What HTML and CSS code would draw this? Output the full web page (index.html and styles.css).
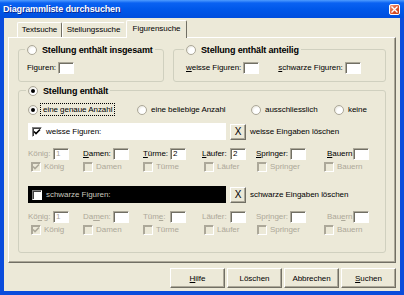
FILE: index.html
```html
<!DOCTYPE html>
<html lang="de">
<head>
  <meta charset="UTF-8" />
  <title>Diagrammliste durchsuchen</title>
  <link rel="stylesheet" href="styles.css">
</head>
<body>
  <div class="window">
    <div class="titlebar">
      <span>Diagrammliste durchsuchen</span>
      <span class="close">
        <svg width="7" height="7" viewBox="0 0 7 7"><path d="M0.5 0.5L6.5 6.5M6.5 0.5L0.5 6.5" stroke="#fff" stroke-width="1.4"/></svg>
      </span>
    </div>

    <div class="client">
      <div class="tabs">
        <span class="tab t1">Textsuche</span>
        <span class="tab t2">Stellungssuche</span>
        <span class="tab active">Figurensuche</span>
      </div>

      <div class="panel">
        <div class="top-groups">
          <fieldset class="group g1">
            <legend><span class="legend-in"><span class="radio"></span><span>Stellung enthält insgesamt</span></span></legend>
            <div class="line"><span>Figuren:</span><span class="field"></span></div>
          </fieldset>
          <fieldset class="group g2">
            <legend><span class="legend-in"><span class="radio"></span><span>Stellung enthält anteilig</span></span></legend>
            <div class="line">
              <span><u>w</u>eisse Figuren:</span><span class="field"></span>
              <span class="spacer"></span>
              <span><u>s</u>chwarze Figuren:</span><span class="field"></span>
            </div>
          </fieldset>
        </div>

        <fieldset class="group g3">
          <legend><span class="legend-in"><span class="radio on"></span><span>Stellung enthält</span></span></legend>

          <div class="choices">
            <span class="opt"><span class="radio on"></span><span class="focus">eine genaue Anzahl</span></span>
            <span class="opt"><span class="radio"></span><span>eine beliebige Anzahl</span></span>
            <span class="opt"><span class="radio"></span><span>ausschliesslich</span></span>
            <span class="opt"><span class="radio"></span><span>keine</span></span>
          </div>

          <div class="bar">
            <span class="bar-field">
              <span class="check">
                <svg width="8" height="8" viewBox="0 0 8 8"><path d="M1 3.5L3 5.5L7 1.5" fill="none" stroke="#000" stroke-width="1.6"/></svg>
              </span>
              <span>weisse Figuren:</span>
            </span>
            <span class="xbtn">X</span>
            <span>weisse Eingaben löschen</span>
          </div>

          <div class="counts">
            <span class="off">König:</span><span class="field off">1</span>
            <span><u>D</u>amen:</span><span class="field"></span>
            <span><u>T</u>ürme:</span><span class="field">2</span>
            <span><u>L</u>äufer:</span><span class="field">2</span>
            <span><u>S</u>pringer:</span><span class="field"></span>
            <span><u>B</u>auern:</span><span class="field"></span>
          </div>
          <div class="checks off">
            <span class="cb"><span class="check dim">
              <svg width="8" height="8" viewBox="0 0 8 8"><path d="M1 3.5L3 5.5L7 1.5" fill="none" stroke="#aca899" stroke-width="1.6"/></svg>
            </span><span>König</span></span>
            <span class="cb"><span class="check dim"></span><span>Damen</span></span>
            <span class="cb"><span class="check dim"></span><span>Türme</span></span>
            <span class="cb"><span class="check dim"></span><span>Läufer</span></span>
            <span class="cb"><span class="check dim"></span><span>Springer</span></span>
            <span class="cb"><span class="check dim"></span><span>Bauern</span></span>
          </div>

          <div class="bar dark-row">
            <span class="bar-field dark">
              <span class="check"></span>
              <span>schwarze Figuren:</span>
            </span>
            <span class="xbtn">X</span>
            <span>schwarze Eingaben löschen</span>
          </div>

          <div class="counts off">
            <span>Kö<u>n</u>ig:</span><span class="field">1</span>
            <span>Da<u>m</u>en:</span><span class="field"></span>
            <span>Tüm<u>e</u>:</span><span class="field"></span>
            <span>Läufer:</span><span class="field"></span>
            <span>Spr<u>i</u>nger:</span><span class="field"></span>
            <span>Bau<u>e</u>rn:</span><span class="field"></span>
          </div>
          <div class="checks off">
            <span class="cb"><span class="check dim">
              <svg width="8" height="8" viewBox="0 0 8 8"><path d="M1 3.5L3 5.5L7 1.5" fill="none" stroke="#aca899" stroke-width="1.6"/></svg>
            </span><span>König</span></span>
            <span class="cb"><span class="check dim"></span><span>Damen</span></span>
            <span class="cb"><span class="check dim"></span><span>Türme</span></span>
            <span class="cb"><span class="check dim"></span><span>Läufer</span></span>
            <span class="cb"><span class="check dim"></span><span>Springer</span></span>
            <span class="cb"><span class="check dim"></span><span>Bauern</span></span>
          </div>
        </fieldset>
      </div>

      <div class="buttons">
        <span class="btn"><u>H</u>ilfe</span>
        <span class="btn">Löschen</span>
        <span class="btn">Abbrechen</span>
        <span class="btn"><u>S</u>uchen</span>
      </div>
    </div>
  </div>
</body>
</html>
```

FILE: styles.css
```css
* {
  box-sizing: border-box;
}
body {
  margin: 0;
  width: 404px;
  height: 295px;
  overflow: hidden;
  font-family: "Liberation Sans", Arial, sans-serif;
  font-size: 8px;
  letter-spacing: -0.05px;
  color: #000;
  background: #ece9d8;
}
u {
  text-decoration-thickness: 1px;
  text-underline-offset: 1px;
}
.window {
  height: 295px;
  display: flex;
  flex-direction: column;
}
.titlebar {
  height: 18px;
  display: flex;
  align-items: center;
  justify-content: space-between;
  padding: 0 4px 0 3px;
  background: linear-gradient(#4f9cff, #0a62f2 3px, #0058ea 50%, #004ede);
  color: #fff;
  font-size: 9px;
  font-weight: bold;
  letter-spacing: -0.15px;
  text-shadow: 1px 1px #0b2a94;
}
.close {
  width: 11px;
  height: 11px;
  border: 1px solid #fff;
  border-radius: 2px;
  background: linear-gradient(135deg, #f4a07e, #e0532a 55%, #c63c12);
  display: flex;
  align-items: center;
  justify-content: center;
}
.client {
  flex: 1;
  display: flex;
  flex-direction: column;
  border: solid #0a4cdc;
  border-width: 0 4px 4px;
  padding: 0 4px;
}
.tabs {
  display: flex;
  align-items: flex-end;
  height: 17px;
  margin: 2px 0 0 9px;
  position: relative;
  z-index: 1;
}
.tab {
  height: 15px;
  line-height: 13px;
  text-align: center;
  border: 1px solid;
  border-bottom: none;
  border-color: #fff #716f64 #fff #fff;
  border-radius: 2px 2px 0 0;
}
.t1 {
  width: 45px;
}
.t2 {
  width: 63px;
  border-right-color: transparent;
}
.tab.active {
  width: 61px;
  height: 18px;
  line-height: 15px;
  margin: 0 0 -1px 1px;
  background: #ece9d8;
}
.panel {
  height: 226px;
  border: 1px solid;
  border-color: #fff #716f64 #716f64 #fff;
  box-shadow: inset -1px -1px #aca899;
  padding: 5px 9px 0;
}
.top-groups {
  display: flex;
  gap: 9px;
}
.group {
  margin: 0;
  min-width: 0;
  border: 1px solid #d0d0bf;
  border-radius: 3px;
}
.group legend {
  padding: 0 2px;
  margin-left: -2px;
}
.legend-in {
  display: flex;
  align-items: center;
  gap: 5px;
  height: 13px;
  font-size: 9px;
  font-weight: bold;
  letter-spacing: -0.15px;
}
.g1 {
  width: 146px;
  padding: 5px 8px 7px;
}
.g2 {
  width: 213px;
  padding: 5px 8px 7px 12px;
}
.line {
  display: flex;
  align-items: center;
  gap: 2px;
  height: 13px;
}
.spacer {
  width: 15px;
}
.radio {
  width: 10px;
  height: 10px;
  border-radius: 50%;
  border: 1px solid #aca899;
  background: radial-gradient(circle at 65% 65%, #fff 40%, #dcd9cc);
  display: flex;
  align-items: center;
  justify-content: center;
  flex: none;
}
.radio.on::after {
  content: "";
  width: 4px;
  height: 4px;
  border-radius: 50%;
  background: #000;
}
.field {
  width: 16px;
  height: 12px;
  background: #fff;
  border: 1px solid;
  border-color: #aca899 #fff #fff #aca899;
  box-shadow: inset 1px 1px #716f64;
  padding-left: 2px;
  line-height: 10px;
  flex: none;
}
.g3 {
  margin-top: 2px;
  padding: 6px 9px 16px;
}
.choices {
  display: grid;
  grid-template-columns: 109px 114px 83px auto;
  align-items: center;
  height: 13px;
}
.opt {
  display: flex;
  align-items: center;
  gap: 4px;
}
.focus {
  outline: 1px dotted #000;
  outline-offset: 1px;
  padding: 0 1px;
}
.bar {
  display: flex;
  align-items: center;
  gap: 4px;
  height: 17px;
  margin-top: 7px;
}
.dark-row {
  margin-top: 13px;
}
.bar-field {
  width: 198px;
  height: 17px;
  display: flex;
  align-items: center;
  gap: 4px;
  padding-left: 4px;
  background: #fff;
}
.bar-field.dark {
  background: #000;
  color: #c9c7bd;
}
.check {
  width: 10px;
  height: 10px;
  background: #fff;
  border: 1px solid;
  border-color: #808080 #fff #fff #808080;
  box-shadow: inset 1px 1px #404040;
  display: flex;
  align-items: center;
  justify-content: center;
  flex: none;
}
.check.dim {
  background: #ece9d8;
  border-color: #aca899 #fff #fff #aca899;
  box-shadow: inset 1px 1px #aca899;
}
.xbtn {
  width: 16px;
  height: 16px;
  display: flex;
  align-items: center;
  justify-content: center;
  font-size: 10px;
  border: 1px solid;
  border-color: #fff #716f64 #716f64 #fff;
  box-shadow: inset -1px -1px #aca899;
}
.counts {
  display: grid;
  grid-template-columns: 25px 30px 30px 30px 27px 32px 28px 26px 34px 37px 26px 16px;
  align-items: center;
  height: 13px;
  margin-top: 7px;
  white-space: nowrap;
}
.off,
.off .field {
  color: #aca899;
}
.checks {
  display: grid;
  grid-template-columns: 52px 60px 61px 53px 67px auto;
  align-items: center;
  height: 13px;
  padding-left: 3px;
}
.cb {
  display: flex;
  align-items: center;
  gap: 3px;
}
.buttons {
  display: flex;
  justify-content: flex-end;
  gap: 2px;
  margin-top: 5px;
}
.btn {
  width: 55px;
  height: 20px;
  display: flex;
  align-items: center;
  justify-content: center;
  border: 1px solid;
  border-color: #fff #716f64 #716f64 #fff;
  box-shadow: inset -1px -1px #aca899;
}
```
